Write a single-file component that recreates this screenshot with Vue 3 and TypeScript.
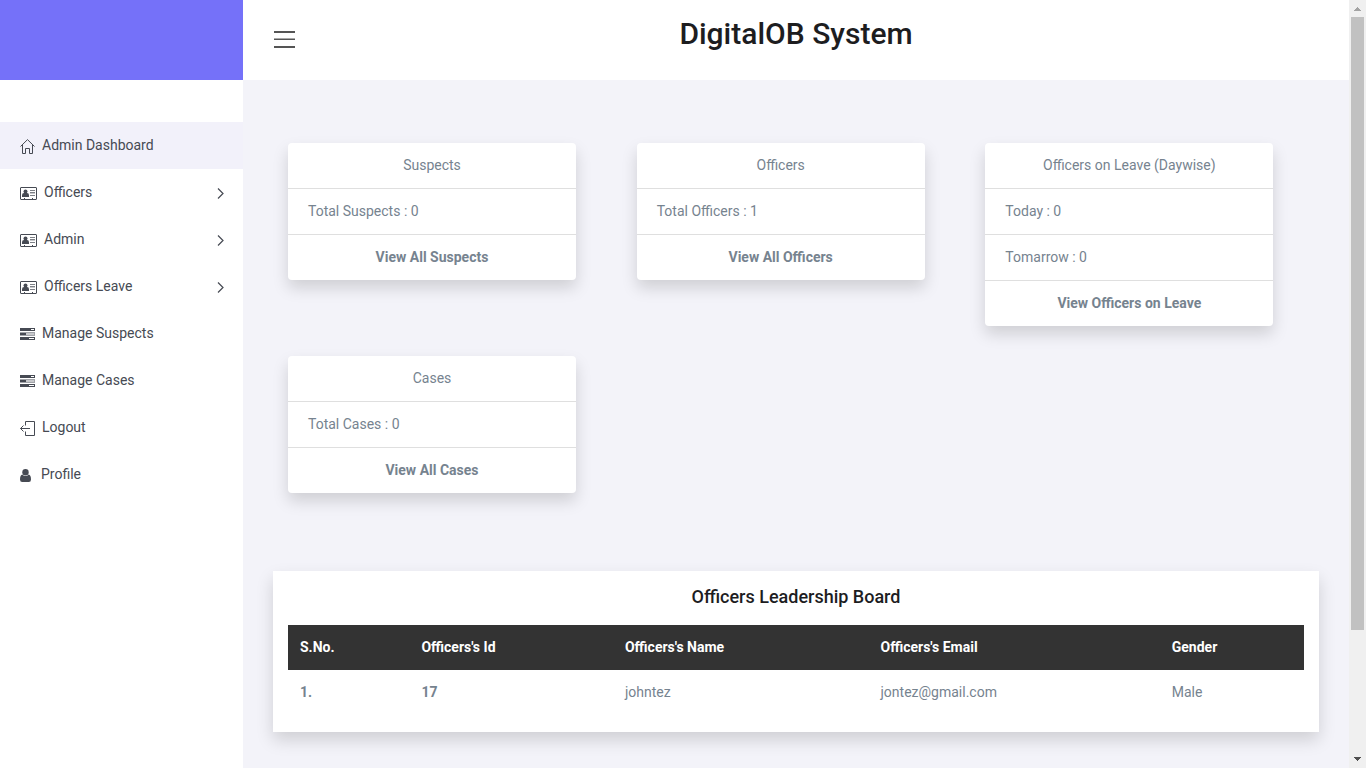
<script setup lang="ts">
import { ref } from 'vue'

type IconName = 'home' | 'id' | 'tasks' | 'logout' | 'user'

interface MenuItem {
  label: string
  icon: IconName
  expandable?: boolean
}

interface SummaryCard {
  title: string
  lines: string[]
  link: string
}

interface Officer {
  no: string
  id: string
  name: string
  email: string
  gender: string
}

const active = ref('Admin Dashboard')

const menu: MenuItem[] = [
  { label: 'Admin Dashboard', icon: 'home' },
  { label: 'Officers', icon: 'id', expandable: true },
  { label: 'Admin', icon: 'id', expandable: true },
  { label: 'Officers Leave', icon: 'id', expandable: true },
  { label: 'Manage Suspects', icon: 'tasks' },
  { label: 'Manage Cases', icon: 'tasks' },
  { label: 'Logout', icon: 'logout' },
  { label: 'Profile', icon: 'user' },
]

const cards: SummaryCard[] = [
  { title: 'Suspects', lines: ['Total Suspects : 0'], link: 'View All Suspects' },
  { title: 'Officers', lines: ['Total Officers : 1'], link: 'View All Officers' },
  {
    title: 'Officers on Leave (Daywise)',
    lines: ['Today : 0', 'Tomarrow : 0'],
    link: 'View Officers on Leave',
  },
  { title: 'Cases', lines: ['Total Cases : 0'], link: 'View All Cases' },
]

const officers: Officer[] = [
  { no: '1.', id: '17', name: 'johntez', email: 'jontez@gmail.com', gender: 'Male' },
]
</script>

<template>
  <div class="app">
    <aside class="sidebar">
      <div class="brand"></div>
      <nav class="menu">
        <a
          v-for="item in menu"
          :key="item.label"
          href="#"
          class="menu-item"
          :class="{ active: item.label === active }"
          @click.prevent="active = item.label"
        >
          <svg v-if="item.icon === 'home'" class="icon" width="15" height="15" viewBox="0 0 15 15" fill="none" stroke="currentColor">
            <path d="M.5 7.500 7.500.600l7 6.900M2.500 6v8.500h3v-5h4v5h3V6" />
          </svg>
          <svg v-else-if="item.icon === 'id'" class="icon" width="17" height="13" viewBox="0 0 17 13">
            <rect x=".5" y=".5" width="16" height="12" rx=".5" fill="none" stroke="currentColor" />
            <circle cx="5.500" cy="4.500" r="2" fill="currentColor" />
            <path d="M2 10V8.200Q2 6 4 6h3q2 0 2 2.200V10z" fill="currentColor" />
            <path d="M10 3h5v1h-5zM10 5h5v1h-5zM10 8h5v1h-5z" fill="currentColor" opacity=".7" />
            <path d="M10 6h5v1h-5z" fill="currentColor" opacity=".3" />
            <path d="M4 11h1v1H4zM12 11h1v1h-1z" fill="currentColor" />
          </svg>
          <svg v-else-if="item.icon === 'tasks'" class="icon" width="15" height="13" viewBox="0 0 15 13">
            <path d="M0 0h15v3H0zM0 9h15v3H0z" fill="currentColor" />
            <path d="M0 4h15v4H0z" fill="currentColor" opacity=".5" />
            <path d="M0 5h6v2H0z" fill="currentColor" />
            <path d="M11 1h3v1h-3zM9 10h5v1H9z" fill="#fff" />
            <path d="M6 5h8v2H6z" fill="#fff" opacity=".4" />
          </svg>
          <svg v-else-if="item.icon === 'logout'" class="icon" width="15" height="15" viewBox="0 0 15 15" fill="none" stroke="currentColor">
            <path d="M5.500 4.500v-4h9v14h-9v-4M.5 7.500H10M3.500 4.500l-3 3 3 3" />
          </svg>
          <svg v-else class="icon" width="11" height="13" viewBox="0 0 11 13" fill="currentColor">
            <circle cx="5.500" cy="3.300" r="3.200" />
            <path d="M2.400 5.500Q0 6 0 10.500 0 13 2.200 13h6.600Q11 13 11 10.500 11 6 8.600 5.500 7.300 7 5.500 7T2.400 5.500z" />
          </svg>
          <span class="label">{{ item.label }}</span>
          <svg v-if="item.expandable" class="chevron" width="8" height="11" viewBox="0 0 8 11" fill="none" stroke="currentColor" stroke-width="1.200">
            <path d="M2 .5l5 5-5 5" />
          </svg>
        </a>
      </nav>
    </aside>

    <main class="main">
      <header class="topbar">
        <button class="toggle" type="button" aria-label="Toggle menu">
          <svg width="22" height="18" viewBox="0 0 22 18" fill="#555">
            <path d="M1 0h21v2H1zM1 7.500h21v1.500H1zM1 15h21v2H1z" />
          </svg>
        </button>
        <h1>DigitalOB System</h1>
      </header>

      <div class="content">
        <section class="cards">
          <article v-for="card in cards" :key="card.title" class="card">
            <div class="row centered">{{ card.title }}</div>
            <div v-for="line in card.lines" :key="line" class="row">{{ line }}</div>
            <div class="row centered"><a href="#" @click.prevent>{{ card.link }}</a></div>
          </article>
        </section>

        <section class="board">
          <h2>Officers Leadership Board</h2>
          <table>
            <thead>
              <tr>
                <th>S.No.</th>
                <th>Officers's Id</th>
                <th>Officers's Name</th>
                <th>Officers's Email</th>
                <th>Gender</th>
              </tr>
            </thead>
            <tbody>
              <tr v-for="o in officers" :key="o.id">
                <th scope="row">{{ o.no }}</th>
                <th scope="row">{{ o.id }}</th>
                <td>{{ o.name }}</td>
                <td>{{ o.email }}</td>
                <td>{{ o.gender }}</td>
              </tr>
            </tbody>
          </table>
        </section>
      </div>
    </main>

    <div class="scrollbar" aria-hidden="true">
      <svg width="17" height="17" viewBox="0 0 17 17" fill="#a3a3a3" shape-rendering="crispEdges">
        <path d="M8 7h1v1h1v1h1v1h1v1H5v-1h1V9h1V8h1z" />
      </svg>
      <div class="track"><div class="thumb"></div></div>
      <svg width="17" height="17" viewBox="0 0 17 17" fill="#505050" shape-rendering="crispEdges">
        <path d="M5 6h7v1h-1v1h-1v1H9v1H8V9H7V8H6V7H5z" />
      </svg>
    </div>
  </div>
</template>

<style>
body {
  margin: 0;
  overflow: hidden;
}
</style>

<style scoped>
* {
  box-sizing: border-box;
}

.app {
  display: flex;
  height: 100vh;
  overflow: hidden;
  background: #f3f3f9;
  color: #76838f;
  font: 14px/21px Roboto, "Liberation Sans", sans-serif;
}

.sidebar {
  flex: 0 0 243px;
  background: #fff;
}

.brand {
  height: 80px;
  background: #7571f9;
}

.menu {
  padding-top: 42px;
}

.menu-item {
  display: flex;
  align-items: center;
  height: 47px;
  padding: 0 19px 0 20px;
  color: #464a53;
  text-decoration: none;
}

.menu-item.active {
  background: #f2f1fa;
}

.icon {
  flex: none;
  margin-top: 2px;
}

.label {
  flex: 1;
  margin-left: 7px;
}

.icon[width="11"] + .label {
  margin-left: 10px;
}

.chevron {
  flex: none;
  margin-top: 2px;
}

.main {
  flex: 1;
  min-width: 0;
  overflow: hidden;
}

.topbar {
  display: grid;
  grid-template-columns: 22px 1fr 22px;
  height: 80px;
  padding: 16px 30px 0;
  background: #fff;
}

.toggle {
  align-self: start;
  width: 22px;
  height: 18px;
  margin-top: 15px;
  padding: 0;
  border: 0;
  background: none;
  cursor: pointer;
}

.toggle svg {
  display: block;
}

h1 {
  margin: 0;
  color: #1d1d1f;
  font-size: 30px;
  font-weight: 500;
  line-height: 36px;
  text-align: center;
}

.content {
  padding: 63px 30px 36px;
}

.cards {
  display: grid;
  grid-template-columns: repeat(3, 1fr);
  align-items: start;
  row-gap: 30px;
}

.card {
  width: 288px;
  margin-left: 15px;
  border-radius: 4px;
  background: #fff;
  box-shadow: 0 8px 16px rgba(0, 0, 0, 0.15);
}

.row {
  padding: 12px 20px;
}

.row + .row {
  border-top: 1px solid #dfdfdf;
}

.centered {
  text-align: center;
}

.card a {
  color: inherit;
  font-weight: 700;
  text-decoration: none;
}

.board {
  margin-top: 78px;
  padding: 15px 15px 17px;
  background: #fff;
  box-shadow: 0 8px 16px rgba(0, 0, 0, 0.15);
}

h2 {
  margin: 0 0 17px;
  color: #1d1d1f;
  font-size: 18px;
  font-weight: 500;
  line-height: 22px;
  text-align: center;
}

table {
  width: 100%;
  border-collapse: collapse;
}

th,
td {
  padding: 12px;
  text-align: left;
}

thead th {
  background: #333;
  color: #fff;
  font-weight: 700;
}

tbody th {
  font-weight: 700;
}

.scrollbar {
  display: flex;
  flex: 0 0 17px;
  flex-direction: column;
  background: #f0f0f0;
}

.scrollbar svg {
  flex: none;
}

.track {
  flex: 1;
  padding: 0 2px;
}

.thumb {
  height: 83.500%;
  background: #c1c1c1;
}
</style>
